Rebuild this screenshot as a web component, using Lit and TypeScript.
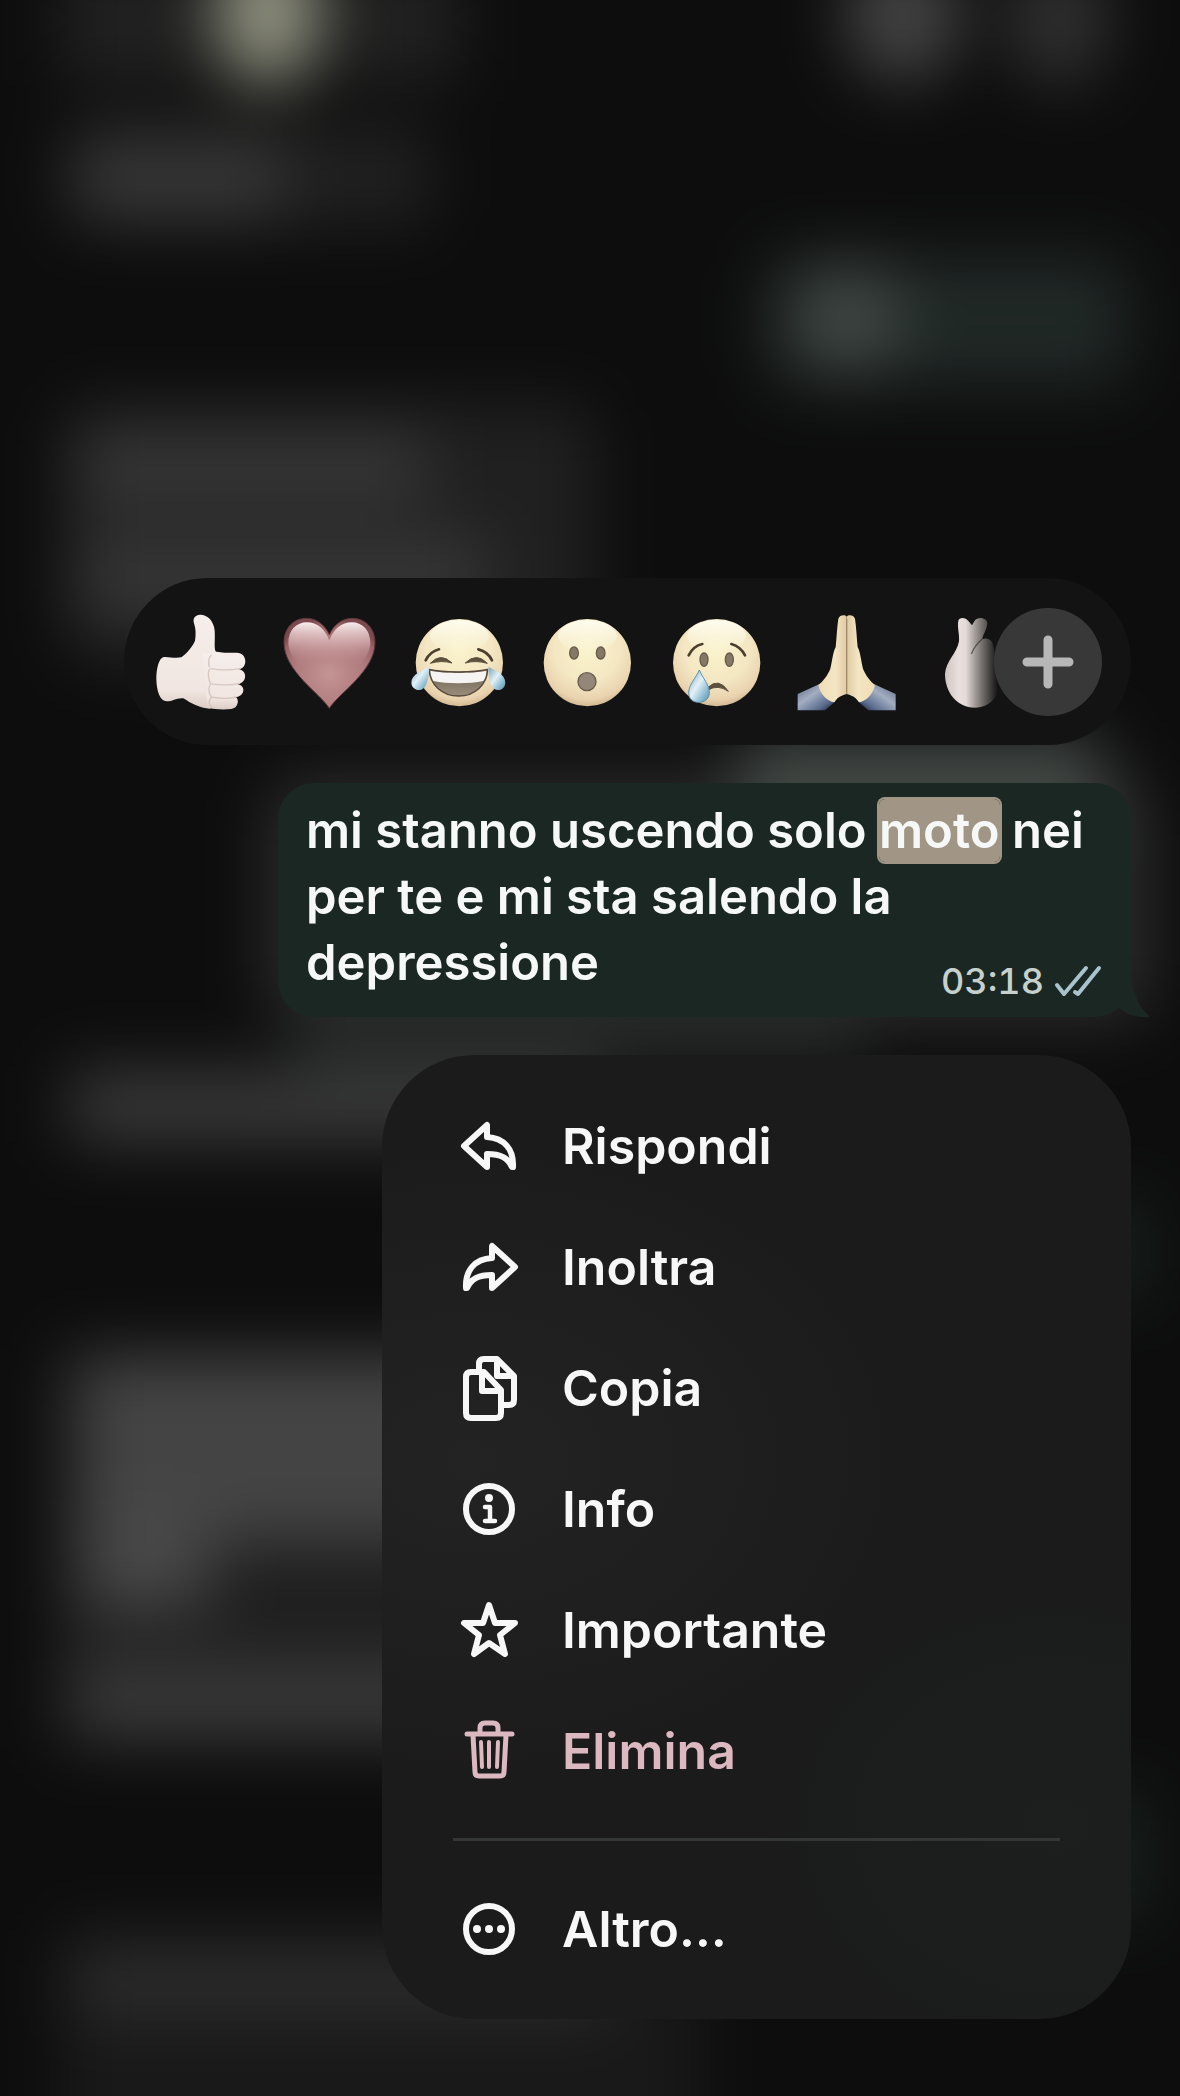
import { LitElement, html, css, svg } from "lit";
import { customElement, property } from "lit/decorators.js";
import { classMap } from "lit/directives/class-map.js";

// Gradients have to live in the same shadow root as the shapes using them
const emojiDefs = svg`
    <defs>
        <radialGradient id="face" cx="50%" cy="34%" r="68%">
            <stop offset="0" stop-color="#faf4cc" />
            <stop offset=".55" stop-color="#f4e7c3" />
            <stop offset=".85" stop-color="#ead3af" />
            <stop offset="1" stop-color="#cdb28d" />
        </radialGradient>
        <linearGradient id="gloss" x1="0" y1="0" x2="0" y2="1">
            <stop offset="0" stop-color="#fffef2" stop-opacity=".9" />
            <stop offset="1" stop-color="#fffef2" stop-opacity="0" />
        </linearGradient>
        <linearGradient id="tear" x1="0" y1="0" x2="1" y2="1">
            <stop offset=".1" stop-color="#8fb4c8" />
            <stop offset=".45" stop-color="#e3f1f7" />
            <stop offset=".75" stop-color="#8dbcd3" />
            <stop offset="1" stop-color="#5389a6" />
        </linearGradient>
        <linearGradient id="dark" x1="0" y1="0" x2="0" y2="1">
            <stop offset="0" stop-color="#6a5f50" />
            <stop offset="1" stop-color="#9b8e7b" />
        </linearGradient>
    </defs>`;

const face = (cx: number) => svg`
    <circle cx=${cx} cy="146" r="131" fill="url(#face)" />
    <ellipse cx=${cx} cy="66" rx="88" ry="48" fill="url(#gloss)" />`;

const reactions = [
    {
        label: "Mi piace",
        art: svg`
            <defs>
                <linearGradient id="skin" x1="0" y1="0" x2="0" y2="1">
                    <stop offset="0" stop-color="#f5eeeb" />
                    <stop offset=".8" stop-color="#f1e6e1" />
                    <stop offset="1" stop-color="#dccdc6" />
                </linearGradient>
            </defs>
            <path d="M36 129C20 131 13 165 13 196C14 232 24 262 44 262C62 262 76 250 94 253C118 268 140 282 175 284L182 125L192 114C185 104 190 80 188 50C186 20 165 1 144 2C130 3 123 12 125 24C132 44 132 62 129 80C122 98 104 118 88 130C68 134 52 128 36 129Z" fill="url(#skin)" />
            <path d="M150 118H180C194 108 206 118 222 116H254C288 116 288 165 258 166C288 168 286 208 256 211C282 213 280 248 250 250C264 254 258 284 238 285C214 288 190 286 166 282Z" fill="url(#skin)" />
            <path d="M172 158C168 146 170 130 178 124M176 164C200 168 240 168 264 164M174 209C200 213 240 213 262 208M176 249C200 253 235 254 252 249M172 166C166 180 170 200 176 208M174 212C168 226 172 240 178 248M178 251C168 260 170 276 182 281" fill="none" stroke="#d6c7c0" stroke-width="4" stroke-linecap="round" />`
    },
    {
        label: "Cuore",
        art: svg`
            <defs>
                <radialGradient id="heart" cx="50%" cy="62%" r="62%">
                    <stop offset="0" stop-color="#c49393" />
                    <stop offset=".6" stop-color="#b07c7e" />
                    <stop offset=".9" stop-color="#996265" />
                    <stop offset="1" stop-color="#7c4a4e" />
                </radialGradient>
                <linearGradient id="heartGloss" x1="0" y1="0" x2="0" y2="1">
                    <stop offset="0" stop-color="#f9eded" />
                    <stop offset=".45" stop-color="#dcb9ba" stop-opacity=".7" />
                    <stop offset="1" stop-color="#b78083" stop-opacity="0" />
                </linearGradient>
            </defs>
            <path d="M145 283C120 240 9 172 9 86C9 42 38 13 76 13C108 13 132 34 145 62C158 34 182 13 214 13C252 13 282 42 282 86C282 172 170 240 145 283Z" fill="url(#heart)" stroke="#5e383b" stroke-width="3" />
            <path d="M145 80C132 44 108 25 78 25C46 25 22 48 22 88C24 112 34 132 50 150C80 160 210 160 240 150C256 132 266 112 268 88C268 48 244 25 212 25C182 25 158 44 145 80Z" fill="url(#heartGloss)" />`
    },
    {
        label: "Risata",
        art: svg`
            ${face(148)}
            <g fill="none" stroke="#4b3f2e" stroke-width="8" stroke-linecap="round">
                <path d="M47 139Q60 113 87 106" />
                <path d="M205 106Q234 113 246 139" />
            </g>
            <path d="M61 148Q92 114 126 147Q94 138 61 148ZM166 147Q200 114 232 148Q198 138 166 147Z" fill="#5d503d" stroke="#5d503d" stroke-width="3" stroke-linejoin="round" />
            <path d="M57 166C100 176 190 176 233 166C232 212 194 246 146 246C96 246 60 212 57 166Z" fill="url(#dark)" stroke="#56493a" stroke-width="4" />
            <path d="M61 170C100 179 190 179 229 170C229 182 226 192 220 201C180 210 110 210 70 201C65 192 62 182 61 170Z" fill="#f6f4f2" />
            <path d="M57 158C36 170 4 180 4 206C5 222 18 229 30 228C50 226 58 190 57 158Z" fill="url(#tear)" />
            <path d="M236 158C257 170 286 180 286 206C285 222 274 229 262 228C242 226 234 190 236 158Z" fill="url(#tear)" />`
    },
    {
        label: "Stupore",
        art: svg`
            ${face(145)}
            <g fill="#857966" stroke="#685c4a" stroke-width="4">
                <ellipse cx="105" cy="117" rx="13" ry="18" />
                <ellipse cx="185" cy="117" rx="13" ry="18" />
                <circle cx="144" cy="203" r="27" fill="#94877a" />
            </g>`
    },
    {
        label: "Tristezza",
        art: svg`
            ${face(146)}
            <g fill="#857966" stroke="#685c4a" stroke-width="4">
                <ellipse cx="108" cy="137" rx="12" ry="20" />
                <ellipse cx="184" cy="137" rx="12" ry="20" />
            </g>
            <g fill="none" stroke="#4b3f2e" stroke-width="8" stroke-linecap="round">
                <path d="M62 124Q76 96 103 90" />
                <path d="M190 90Q218 98 231 124" />
            </g>
            <path d="M118 222Q152 188 181 232Q150 210 120 228Z" fill="#5d503d" stroke="#5d503d" stroke-width="3" stroke-linejoin="round" />
            <path d="M94 168C104 192 124 212 124 236C124 254 110 265 92 265C74 265 62 254 62 236C62 212 84 192 94 168Z" fill="url(#tear)" stroke="#5b91ad" stroke-width="3" />`
    },
    {
        label: "Grazie",
        art: svg`
            <defs>
                <linearGradient id="palm" x1="0" y1="0" x2="1" y2="0">
                    <stop offset="0" stop-color="#efdcb4" />
                    <stop offset=".6" stop-color="#f4e6c4" />
                    <stop offset="1" stop-color="#dfcaa2" />
                </linearGradient>
                <linearGradient id="sleeve" x1="0" y1="0" x2="1" y2="1">
                    <stop offset="0" stop-color="#5b6883" />
                    <stop offset=".4" stop-color="#a3aec2" />
                    <stop offset=".75" stop-color="#5a6c8e" />
                    <stop offset="1" stop-color="#10192f" />
                </linearGradient>
                <g id="half">
                    <path d="M2 240L66 211C74 236 92 254 114 263L84 289H2Z" fill="url(#sleeve)" />
                    <path d="M149 8C144 1 128 2 124 14C120 40 119 70 116 100C108 112 106 140 100 164C92 184 78 202 64 213C70 242 92 262 112 265C120 254 126 246 149 240Z" fill="url(#palm)" />
                </g>
            </defs>
            <use href="#half" />
            <use href="#half" transform="translate(298 0) scale(-1 1)" />
            <path d="M149 14V240" stroke="#a08a69" stroke-width="4" />`
    },
    {
        label: "Cuore con le dita",
        art: svg`
            <defs>
                <linearGradient id="fingers" x1="0" y1="0" x2="1" y2="0">
                    <stop offset="0" stop-color="#cfc4c0" />
                    <stop offset=".25" stop-color="#e9e0dd" />
                    <stop offset="1" stop-color="#cbbfba" />
                </linearGradient>
            </defs>
            <path d="M97 20C100 8 120 10 128 22L138 34L146 20C156 6 186 12 184 30C182 46 172 60 168 76C180 70 200 76 202 96L222 190C226 240 196 281 147 281C90 281 57 232 57 180C60 140 92 120 99 82C101 60 93 40 97 20Z" fill="url(#fingers)" />
            <path d="M168 76Q148 92 136 120" fill="none" stroke="#756a66" stroke-width="4" />`
    }
];

const replyArrow = svg`<path d="M7 32L30 11V23C47 24 57 35 56 53H55C51 44 44 40 30 40V53Z" stroke-width="6" />`;

const icons = {
    reply: replyArrow,
    forward: svg`<g transform="translate(65 0) scale(-1 1)">${replyArrow}</g>`,
    copy: svg`
        <g stroke-width="6">
            <path d="M22 15V8Q22 3 27 3H40L57 20V44Q57 49 52 49H46" />
            <path d="M40 4V20H56" />
            <path d="M14 16H27L44 34V57Q44 62 39 62H14Q9 62 9 57V21Q9 16 14 16Z" />
            <path d="M25 17V35H43" />
        </g>`,
    info: svg`
        <circle cx="32" cy="32" r="23" stroke-width="6" />
        <circle cx="32" cy="21" r="4" fill="currentColor" stroke="none" />
        <path d="M28 30H33V44M28 44H38" stroke-width="4.5" />`,
    star: svg`<path d="M32 7L38 25H58L43 37L48 56L32 45L17 56L22 37L7 25H26Z" stroke-width="6" />`,
    trash: svg`
        <g stroke-width="5">
            <path d="M10 15H55" />
            <path d="M23 14V9Q23 4 28 4H36Q41 4 41 9V14" />
            <path d="M16 16L18 53Q18 57 22 57H43Q47 57 47 53L49 16" />
        </g>
        <path d="M24 23L25 48M32 23V48M41 23L40 48" stroke-width="4" />`,
    more: svg`
        <circle cx="32" cy="32" r="23" stroke-width="6" />
        <g fill="currentColor" stroke="none">
            <circle cx="20" cy="32" r="4" />
            <circle cx="32" cy="32" r="4" />
            <circle cx="44" cy="32" r="4" />
        </g>`
};

type IconName = keyof typeof icons;

interface MenuEntry {
    label: string;
    icon: IconName;
    danger?: boolean;
}

const actions: MenuEntry[] = [
    { label: "Rispondi", icon: "reply" },
    { label: "Inoltra", icon: "forward" },
    { label: "Copia", icon: "copy" },
    { label: "Info", icon: "info" },
    { label: "Importante", icon: "star" },
    { label: "Elimina", icon: "trash", danger: true }
];

@customElement("chat-backdrop")
export class ChatBackdrop extends LitElement {
    static styles = css`
        :host {
            display: block;
        }

        svg {
            display: block;
            width: 100%;
            height: 100%;
        }
    `;

    render() {
        return html`
        <svg viewBox="0 0 1180 2096" preserveAspectRatio="none" aria-hidden="true">
            <defs>
                <filter id="soft" filterUnits="userSpaceOnUse" x="-200" y="-200" width="1580" height="2496" color-interpolation-filters="sRGB">
                    <feGaussianBlur stdDeviation="32" />
                </filter>
            </defs>
            <rect width="1180" height="2096" fill="#0d0d0d" />
            <g filter="url(#soft)">
                <rect x="-200" y="-200" width="1580" height="2496" fill="#0d0d0d" />
                <rect x="60" y="-40" width="400" height="120" fill="#212121" />
                <ellipse cx="268" cy="12" rx="52" ry="74" fill="#8f917f" />
                <ellipse cx="903" cy="16" rx="60" ry="66" fill="#424242" />
                <ellipse cx="1058" cy="20" rx="54" ry="66" fill="#2f2f2f" />
                <rect x="64" y="126" width="370" height="100" rx="30" fill="#202020" />
                <rect x="74" y="136" width="210" height="84" rx="20" fill="#363636" />
                <rect x="764" y="256" width="366" height="130" rx="30" fill="#202826" />
                <ellipse cx="848" cy="318" rx="56" ry="54" fill="#3f4643" />
                <rect x="66" y="404" width="530" height="260" rx="30" fill="#202020" />
                <rect x="76" y="432" width="350" height="72" fill="#363636" />
                <rect x="76" y="536" width="410" height="80" fill="#363636" />
                <rect x="266" y="776" width="886" height="248" rx="40" fill="#2b2b2b" />
                <rect x="740" y="736" width="360" height="100" fill="#434946" />
                <rect x="70" y="1070" width="530" height="72" fill="#393939" />
                <rect x="300" y="1010" width="560" height="60" fill="#232625" />
                <rect x="56" y="1350" width="600" height="396" fill="#1f1f1f" />
                <rect x="80" y="1358" width="580" height="184" fill="#444444" />
                <rect x="80" y="1500" width="130" height="108" fill="#484848" />
                <rect x="74" y="1664" width="590" height="72" fill="#3a3a3a" />
                <rect x="60" y="1930" width="640" height="220" fill="#191919" />
                <rect x="74" y="1948" width="530" height="68" fill="#2c2c2c" />
                <rect x="800" y="1200" width="350" height="100" fill="#18201e" />
                <rect x="800" y="1790" width="350" height="130" fill="#18201e" />
            </g>
        </svg>`;
    }
}

@customElement("reaction-bar")
export class ReactionBar extends LitElement {
    static styles = css`
        :host {
            display: flex;
            align-items: center;
            box-sizing: border-box;
            height: 167px;
            padding: 0 29px 0 28px;
            border-radius: 84px;
            background: #131313;
        }

        .list {
            display: flex;
            flex: 1;
            gap: 33px;
            min-width: 0;
            margin-right: -12px;
            padding: 8px 0;
            overflow: hidden;
            -webkit-mask-image: linear-gradient(to left, transparent 8px, #000 40px);
            mask-image: linear-gradient(to left, transparent 8px, #000 40px);
        }

        button {
            flex: none;
            padding: 0;
            border: 0;
            background: none;
            cursor: pointer;
        }

        svg {
            display: block;
            width: 96px;
            height: 96px;
            overflow: visible;
        }

        .more {
            position: relative;
            display: grid;
            place-items: center;
            width: 108px;
            height: 108px;
            border-radius: 50%;
            background: #383838;
        }

        .more svg {
            width: 52px;
            height: 52px;
        }
    `;

    render() {
        return html`
        <div class="list">
            ${reactions.map(reaction => html`
            <button type="button" aria-label=${reaction.label}>
                <svg viewBox="0 0 288 288" aria-hidden="true">${emojiDefs}${reaction.art}</svg>
            </button>`)}
        </div>
        <button class="more" type="button" aria-label="Altre reazioni">
            <svg viewBox="0 0 52 52" aria-hidden="true">
                <path d="M26 4V48M5 26H47" stroke="#b7b7b7" stroke-width="9" stroke-linecap="round" />
            </svg>
        </button>`;
    }
}

@customElement("message-bubble")
export class MessageBubble extends LitElement {
    static styles = css`
        :host {
            position: relative;
            display: block;
            box-sizing: border-box;
            padding: 15px 29px 18px 28px;
            border-radius: 36px;
            background: #1b2723;
            color: #f5f8f7;
        }

        .text {
            margin: 0;
            font-size: 49px;
            font-weight: 600;
            line-height: 66px;
        }

        mark {
            padding: 2px 0;
            border-radius: 6px;
            background: #a19685;
            box-shadow: 0 0 0 2px #a19685;
            color: inherit;
        }

        /* Floats into the free end of the last line */
        .meta {
            display: flex;
            float: right;
            align-items: center;
            gap: 10px;
            margin-top: 33px;
            color: #c6d1cd;
            font-size: 36px;
            font-weight: 500;
            line-height: 36px;
            font-variant-numeric: tabular-nums;
        }

        .ticks {
            width: 48px;
            height: 32px;
            fill: none;
            stroke: #a9c3cc;
            stroke-width: 4;
            stroke-linecap: round;
            stroke-linejoin: round;
        }

        .tail {
            position: absolute;
            right: -19px;
            bottom: 0;
            width: 48px;
            height: 60px;
            fill: #1b2723;
        }
    `;

    render() {
        return html`
        <p class="text">
            mi stanno uscendo solo <mark>moto</mark> nei per te e mi sta salendo la depressione
            <span class="meta">
                <time datetime="03:18">03:18</time>
                <svg class="ticks" viewBox="0 0 48 32" role="img" aria-label="Letto">
                    <path d="M3 20L10 29L32 3M21 27L24 29L45 3" />
                </svg>
            </span>
        </p>
        <svg class="tail" viewBox="0 0 48 60" aria-hidden="true">
            <path d="M0 0H29V10C29 32 35 48 48 60C36 61 25 58 17 51L0 40Z" />
        </svg>`;
    }
}

@customElement("menu-item")
export class MenuItem extends LitElement {
    @property() label = "";
    @property() icon: IconName = "reply";
    @property({ type: Boolean }) danger = false;

    static styles = css`
        :host {
            display: block;
        }

        button {
            display: flex;
            align-items: center;
            gap: 41px;
            width: 100%;
            height: 121px;
            padding: 0 75px;
            border: 0;
            background: none;
            color: #f7f7f7;
            font: inherit;
            font-size: 50px;
            font-weight: 600;
            text-align: left;
            cursor: pointer;
        }

        .danger {
            color: #dcb8c1;
        }

        svg {
            flex: none;
            width: 64px;
            height: 64px;
            overflow: visible;
            fill: none;
            stroke: currentColor;
            stroke-linecap: round;
            stroke-linejoin: round;
        }
    `;

    render() {
        return html`
        <button type="button" class=${classMap({ danger: this.danger })}>
            <svg viewBox="0 0 64 64" aria-hidden="true">${icons[this.icon]}</svg>
            <span>${this.label}</span>
        </button>`;
    }
}

@customElement("app-root")
export class AppRoot extends LitElement {
    static styles = css`
        :host {
            position: relative;
            display: block;
            box-sizing: border-box;
            min-height: 100vh;
            overflow: hidden;
            background: #0d0d0d;
            font-family: Inter, "Liberation Sans", sans-serif;
        }

        chat-backdrop {
            position: absolute;
            inset: 0;
        }

        main {
            position: relative;
            display: flex;
            flex-direction: column;
            gap: 38px;
            padding: 578px 49px 77px 124px;
        }

        message-bubble {
            margin-left: 154px;
        }

        .menu {
            align-self: flex-end;
            box-sizing: border-box;
            width: 100%;
            max-width: 749px;
            padding: 30px 0;
            border-radius: 92px;
            background:
                radial-gradient(ellipse 60% 34% at 12% 42%, #232323, transparent),
                radial-gradient(ellipse 40% 26% at 90% 80%, #1c1f1e, transparent),
                #1b1b1b;
        }

        hr {
            height: 3px;
            margin: 27px 71px;
            border: 0;
            background: #343535;
        }
    `;

    render() {
        return html`
        <chat-backdrop></chat-backdrop>
        <main>
            <reaction-bar></reaction-bar>
            <message-bubble></message-bubble>
            <nav class="menu">
                ${actions.map(action => html`
                <menu-item .label=${action.label} .icon=${action.icon} .danger=${!!action.danger}></menu-item>`)}
                <hr>
                <menu-item label="Altro…" icon="more"></menu-item>
            </nav>
        </main>`;
    }
}
